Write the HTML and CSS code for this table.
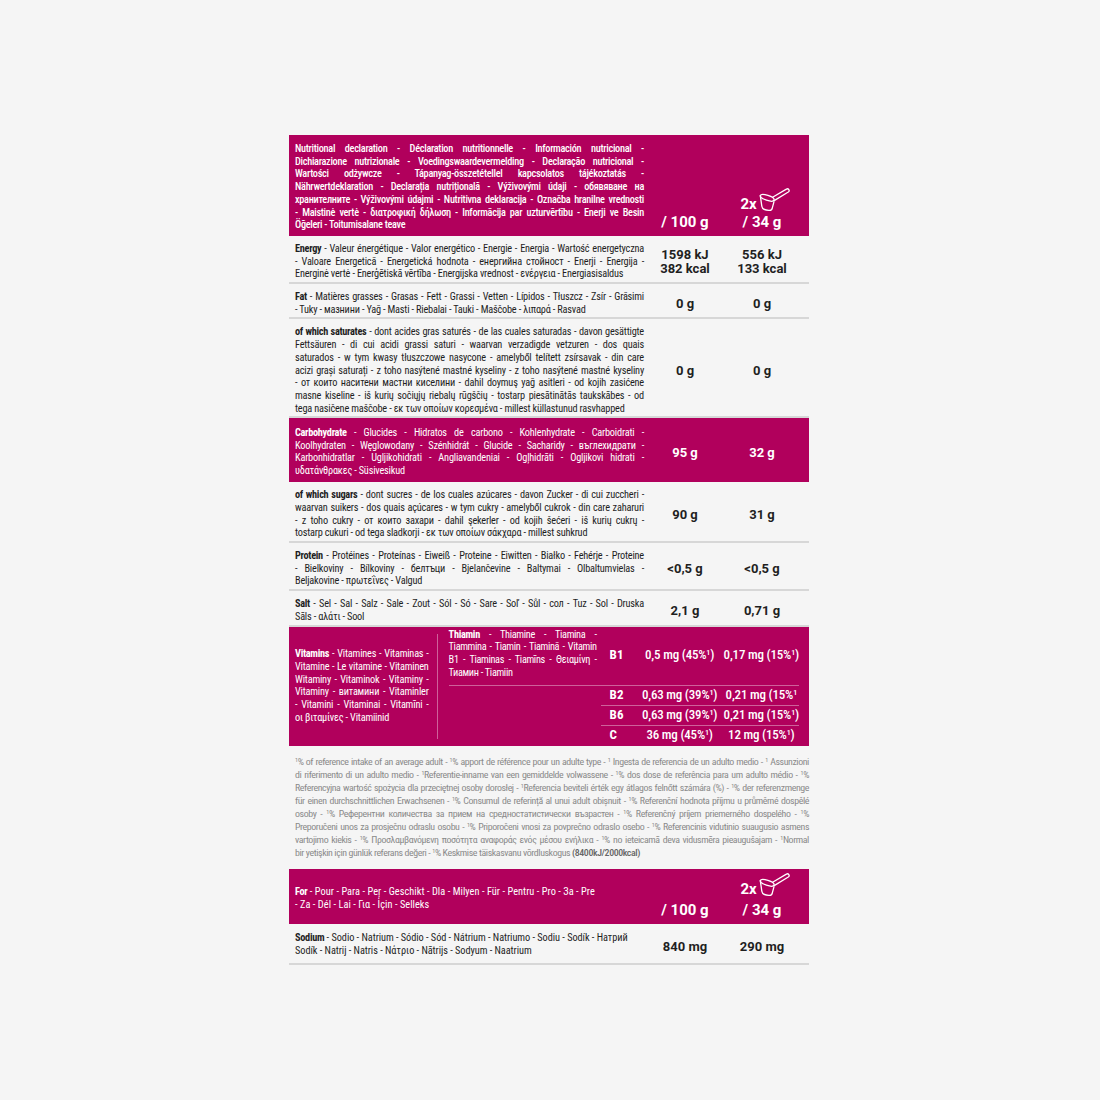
FILE: index.html
```html
<!DOCTYPE html>
<html lang="en">
<head>
<meta charset="utf-8">
<title>Nutritional declaration</title>
<link rel="stylesheet" href="styles.css">
</head>
<body>
<div class="sheet">

  <div class="row mag head">
    <div class="lab">
      <span class="ln">Nutritional declaration - Déclaration nutritionnelle - Información nutricional -</span>
      <span class="ln">Dichiarazione nutrizionale - Voedingswaardevermelding - Declaração nutricional -</span>
      <span class="ln">Wartości odżywcze - Tápanyag-összetétellel kapcsolatos tájékoztatás -</span>
      <span class="ln">Nährwertdeklaration - Declarația nutrițională - Výživovými údaji - обявяване на</span>
      <span class="ln">хранителните - Výživovými údajmi - Nutritivna deklaracija - Označba hranilne vrednosti</span>
      <span class="ln">- Maistinė vertė - διατροφική δήλωση - Informācija par uzturvērtību - Enerji ve Besin</span>
      <span class="last">Öğeleri - Toitumisalane teave</span>
    </div>
    <div class="val hv">/ 100 g</div>
    <div class="val hv">
      <div class="serv">2x<svg class="scoop" viewBox="0 0 32 26" width="32" height="26" fill="none" stroke="#fff" stroke-width="1.3" stroke-linejoin="round" stroke-linecap="round"><path d="M14.6 10.2 L28.4 2.1 A1.7 1.7 0 0 1 30.3 5 L16.6 13.4"/><ellipse cx="9.2" cy="10.8" rx="7.2" ry="2.5" transform="rotate(18 9.2 10.8)"/><path d="M2.3 8.6 L3.8 19.2 Q4.3 22.4 8.2 23 L10.9 23.4 Q14 23.7 14.4 20.6 L16 14.6"/></svg></div>
      / 34 g
    </div>
  </div>

  <div class="row">
    <div class="lab">
      <span class="ln"><b>Energy</b> - Valeur énergétique - Valor energético - Energie - Energia - Wartość energetyczna</span>
      <span class="ln">- Valoare Energetică - Energetická hodnota - енергийна стойност - Enerji - Energija -</span>
      <span class="last">Energinė vertė - Enerģētiskā vērtība - Energijska vrednost - ενέργεια - Energiasisaldus</span>
    </div>
    <div class="val">1598 kJ<br>382 kcal</div>
    <div class="val">556 kJ<br>133 kcal</div>
  </div>

  <div class="row">
    <div class="lab">
      <span class="ln"><b>Fat</b> - Matières grasses - Grasas - Fett - Grassi - Vetten - Lípidos - Tłuszcz - Zsír - Grăsimi</span>
      <span class="last">- Tuky - мазнини - Yağ - Masti - Riebalai - Tauki - Maščobe - λιπαρά - Rasvad</span>
    </div>
    <div class="val">0 g</div>
    <div class="val">0 g</div>
  </div>

  <div class="row">
    <div class="lab">
      <span class="ln"><b>of which saturates</b> - dont acides gras saturés - de las cuales saturadas - davon gesättigte</span>
      <span class="ln">Fettsäuren - di cui acidi grassi saturi - waarvan verzadigde vetzuren - dos quais</span>
      <span class="ln">saturados - w tym kwasy tłuszczowe nasycone - amelyből telített zsírsavak - din care</span>
      <span class="ln">acizi grași saturați - z toho nasýtené mastné kyseliny - z toho nasýtené mastné kyseliny</span>
      <span class="ln">- от които наситени мастни киселини - dahil doymuş yağ asitleri - od kojih zasićene</span>
      <span class="ln">masne kiseline - iš kurių sočiųjų riebalų rūgščių - tostarp piesātinātās taukskābes - od</span>
      <span class="last">tega nasičene maščobe - εκ των οποίων κορεσμένα - millest küllastunud rasvhapped</span>
    </div>
    <div class="val">0 g</div>
    <div class="val">0 g</div>
  </div>

  <div class="row mag">
    <div class="lab">
      <span class="ln"><b>Carbohydrate</b> - Glucides - Hidratos de carbono - Kohlenhydrate - Carboidrati -</span>
      <span class="ln">Koolhydraten - Węglowodany - Szénhidrát - Glucide - Sacharidy - въглехидрати -</span>
      <span class="ln">Karbonhidratlar - Ugljikohidrati - Angliavandeniai - Ogļhidrāti - Ogljikovi hidrati -</span>
      <span class="last">υδατάνθρακες - Süsivesikud</span>
    </div>
    <div class="val">95 g</div>
    <div class="val">32 g</div>
  </div>

  <div class="row">
    <div class="lab">
      <span class="ln"><b>of which sugars</b> - dont sucres - de los cuales azúcares - davon Zucker - di cui zuccheri -</span>
      <span class="ln">waarvan suikers - dos quais açúcares - w tym cukry - amelyből cukrok - din care zaharuri</span>
      <span class="ln">- z toho cukry - от които захари - dahil şekerler - od kojih šećeri - iš kurių cukrų -</span>
      <span class="last">tostarp cukuri - od tega sladkorji - εκ των οποίων σάκχαρα - millest suhkrud</span>
    </div>
    <div class="val">90 g</div>
    <div class="val">31 g</div>
  </div>

  <div class="row">
    <div class="lab">
      <span class="ln"><b>Protein</b> - Protéines - Proteínas - Eiweiß - Proteine - Eiwitten - Białko - Fehérje - Proteine</span>
      <span class="ln">- Bielkoviny - Bílkoviny - белтъци - Bjelančevine - Baltymai - Olbaltumvielas -</span>
      <span class="last">Beljakovine - πρωτεΐνες - Valgud</span>
    </div>
    <div class="val">&lt;0,5 g</div>
    <div class="val">&lt;0,5 g</div>
  </div>

  <div class="row">
    <div class="lab">
      <span class="ln"><b>Salt</b> - Sel - Sal - Salz - Sale - Zout - Sól - Só - Sare - Soľ - Sůl - сол - Tuz - Sol - Druska</span>
      <span class="last">Sāls - αλάτι - Sool</span>
    </div>
    <div class="val">2,1 g</div>
    <div class="val">0,71 g</div>
  </div>

  <div class="vit">
    <div class="vleft">
      <div class="vleft-in">
        <div>
          <span class="ln"><b>Vitamins</b> - Vitamines - Vitaminas -</span>
          <span class="ln">Vitamine - Le vitamine - Vitaminen</span>
          <span class="ln">Witaminy - Vitaminok - Vitaminy -</span>
          <span class="ln">Vitaminy - витамини - Vitaminler</span>
          <span class="ln">- Vitamini - Vitaminai - Vitamīni -</span>
          <span class="last">οι βιταμίνες - Vitamiinid</span>
        </div>
      </div>
    </div>
    <div class="vright">
      <div class="vr">
        <div class="vname">
          <span class="ln"><b>Thiamin</b> - Thiamine - Tiamina -</span>
          <span class="ln">Tiammina - Tiamin - Tiamină - Vitamin</span>
          <span class="ln">B1 - Tiaminas - Tiamīns - Θειαμίνη -</span>
          <span class="last">Тиамин - Tiamiin</span>
        </div>
        <div class="vlab">B1</div>
        <div class="vv">0,5 mg (45%<sup>1</sup>)</div>
        <div class="vv">0,17 mg (15%<sup>1</sup>)</div>
      </div>
      <div class="vr sub">
        <div class="vlab">B2</div>
        <div class="vv">0,63 mg (39%<sup>1</sup>)</div>
        <div class="vv">0,21 mg (15%<sup>1</sup></div>
      </div>
      <div class="vr sub">
        <div class="vlab">B6</div>
        <div class="vv">0,63 mg (39%<sup>1</sup>)</div>
        <div class="vv">0,21 mg (15%<sup>1</sup>)</div>
      </div>
      <div class="vr sub end">
        <div class="vlab">C</div>
        <div class="vv">36 mg (45%<sup>1</sup>)</div>
        <div class="vv">12 mg (15%<sup>1</sup>)</div>
      </div>
    </div>
  </div>

  <div class="note">
    <span class="ln"><sup>1</sup>% of reference intake of an average adult - <sup>1</sup>% apport de référence pour un adulte type - <sup>1</sup> Ingesta de referencia de un adulto medio - <sup>1</sup> Assunzioni</span>
    <span class="ln">di riferimento di un adulto medio - <sup>1</sup>Referentie-inname van een gemiddelde volwassene - <sup>1</sup>% dos dose de referência para um adulto médio - <sup>1</sup>%</span>
    <span class="ln">Referencyjna wartość spożycia dla przeciętnej osoby dorosłej - <sup>1</sup>Referencia beviteli érték egy átlagos felnőtt számára (%) - <sup>1</sup>% der referenzmenge</span>
    <span class="ln">für einen durchschnittlichen Erwachsenen - <sup>1</sup>% Consumul de referință al unui adult obișnuit - <sup>1</sup>% Referenční hodnota příjmu u průměrné dospělé</span>
    <span class="ln">osoby - <sup>1</sup>% Референтни количества за прием на средностатистически възрастен - <sup>1</sup>% Referenčný príjem priemerného dospelého - <sup>1</sup>%</span>
    <span class="ln">Preporučeni unos za prosječnu odraslu osobu - <sup>1</sup>% Priporočeni vnosi za povprečno odraslo osebo - <sup>1</sup>% Referencinis vidutinio suaugusio asmens</span>
    <span class="ln">vartojimo kiekis - <sup>1</sup>% Προσλαμβανόμενη ποσότητα αναφοράς ενός μέσου ενήλικα - <sup>1</sup>% no ieteicamā deva vidusmēra pieaugušajam - <sup>1</sup>Normal</span>
    <span class="last">bir yetişkin için günlük referans değeri - <sup>1</sup>% Keskmise täiskasvanu võrdluskogus <b>(8400kJ/2000kcal)</b></span>
  </div>

  <div class="row mag head2">
    <div class="lab"><b>For</b> - Pour - Para - Peŗ - Geschikt - Dla - Milyen - Für - Pentru - Pro - За - Pre<br>- Za - Dél - Lai - Για - İçin - Selleks</div>
    <div class="val hv">/ 100 g</div>
    <div class="val hv">
      <div class="serv">2x<svg class="scoop" viewBox="0 0 32 26" width="32" height="26" fill="none" stroke="#fff" stroke-width="1.3" stroke-linejoin="round" stroke-linecap="round"><path d="M14.6 10.2 L28.4 2.1 A1.7 1.7 0 0 1 30.3 5 L16.6 13.4"/><ellipse cx="9.2" cy="10.8" rx="7.2" ry="2.5" transform="rotate(18 9.2 10.8)"/><path d="M2.3 8.6 L3.8 19.2 Q4.3 22.4 8.2 23 L10.9 23.4 Q14 23.7 14.4 20.6 L16 14.6"/></svg></div>
      / 34 g
    </div>
  </div>

  <div class="row sod">
    <div class="lab"><b>Sodium</b> - Sodio - Natrium - Sódio - Sód - Nátrium - Natriumo - Sodiu - Sodík - Натрий<br>Sodík - Natrij - Natris - Νάτριο - Nātrijs - Sodyum - Naatrium</div>
    <div class="val">840 mg</div>
    <div class="val">290 mg</div>
  </div>

</div>
</body>
</html>
```
FILE: styles.css
```css
* { box-sizing: border-box; }

html, body {
  margin: 0;
  padding: 0;
  background: #f5f5f5;
}

body {
  font-family: Roboto, "Liberation Sans", sans-serif;
  color: #1f1f1f;
}

.sheet {
  width: 520px;
  margin: 0 0 0 289px;
  padding-top: 135px;
}

/* generic table row */
.row {
  display: grid;
  grid-template-columns: 361px 70px 84px;
  padding-right: 5px;
  border-bottom: 2px solid #d7d7d7;
}

.lab {
  padding: 7px 6px 1px;
  font-size: 10.3px;
  line-height: 12.7px;
  font-stretch: 75%;
  letter-spacing: -0.2px;
}

.lab b, .vleft b, .vname b {
  font-weight: 700;
  letter-spacing: -0.3px;
}

.ln {
  display: block;
  text-align: justify;
  text-align-last: justify;
}

.last {
  display: block;
}

.val {
  align-self: center;
  text-align: center;
  font-weight: 700;
  font-size: 13px;
  line-height: 14px;
  white-space: nowrap;
  padding-top: 6px;
}

/* magenta rows */
.mag {
  background: #b1005c;
  color: #fff;
  border-bottom: 0;
}

.mag .lab {
  padding: 8.5px 6px 4.5px;
}

.head .lab {
  padding: 8px 6px 4px;
  font-weight: 500;
  letter-spacing: -0.3px;
}

.hv {
  align-self: end;
  font-size: 15px;
  line-height: 18px;
  padding-top: 0;
  padding-bottom: 5px;
}

.serv {
  display: flex;
  align-items: center;
  justify-content: center;
  padding-left: 6px;
  line-height: 18px;
}

.scoop {
  display: block;
  margin-left: 1px;
  margin-top: -8px;
}

.head2 .lab {
  align-self: center;
  font-weight: 400;
  padding: 4px 6px 0;
  letter-spacing: 0.05px;
}

.head2 .hv {
  padding-top: 11px;
}

.head2 .serv {
  margin-bottom: 3px;
}

.sod .lab {
  padding: 7.5px 6px 5.5px;
  letter-spacing: -0.05px;
}

/* vitamins block */
.vit {
  display: flex;
  background: #b1005c;
  color: #fff;
  font-stretch: 75%;
}

.vleft {
  width: 153px;
  padding: 7px 0;
  display: flex;
  font-size: 10.3px;
  line-height: 12.7px;
  letter-spacing: -0.2px;
}

.vleft-in {
  flex: 1;
  display: flex;
  align-items: center;
  padding: 0 8px 0 6px;
  border-right: 1px solid rgba(255, 255, 255, 0.38);
}

.vleft-in > div {
  width: 100%;
}

.vright {
  flex: 1;
  padding-right: 10px;
}

.vr {
  display: grid;
  grid-template-columns: 152px 35px 88px 1fr;
  margin-left: 11px;
  border-bottom: 1px solid rgba(255, 255, 255, 0.38);
}

.vr.sub {
  grid-template-columns: 35px 88px 1fr;
  margin-left: 163px;
  height: 20px;
  align-items: start;
}

.vr.end {
  border-bottom: 0;
}

.vname {
  padding: 2px 4px 6px 0;
  font-size: 10.3px;
  line-height: 12.7px;
  letter-spacing: -0.35px;
}

.vlab {
  align-self: center;
  padding-left: 9px;
  font-weight: 700;
  font-size: 13px;
  line-height: 19px;
}

.vv {
  align-self: center;
  text-align: center;
  font-weight: 500;
  font-size: 13px;
  line-height: 19px;
  white-space: nowrap;
  letter-spacing: -0.2px;
}

.vr:first-child .vlab,
.vr:first-child .vv {
  padding-bottom: 3px;
}

.vr.sub .vlab,
.vr.sub .vv {
  align-self: start;
  line-height: 17px;
}

sup {
  font-size: 0.62em;
  line-height: 0;
  vertical-align: 0.45em;
}

/* footnote */
.note {
  padding: 9px 0 10px 6px;
  color: #8a8a8a;
  font-size: 9.9px;
  line-height: 13px;
  font-stretch: 75%;
  letter-spacing: -0.4px;
}

.note b {
  color: #666;
  font-weight: 500;
}
```
